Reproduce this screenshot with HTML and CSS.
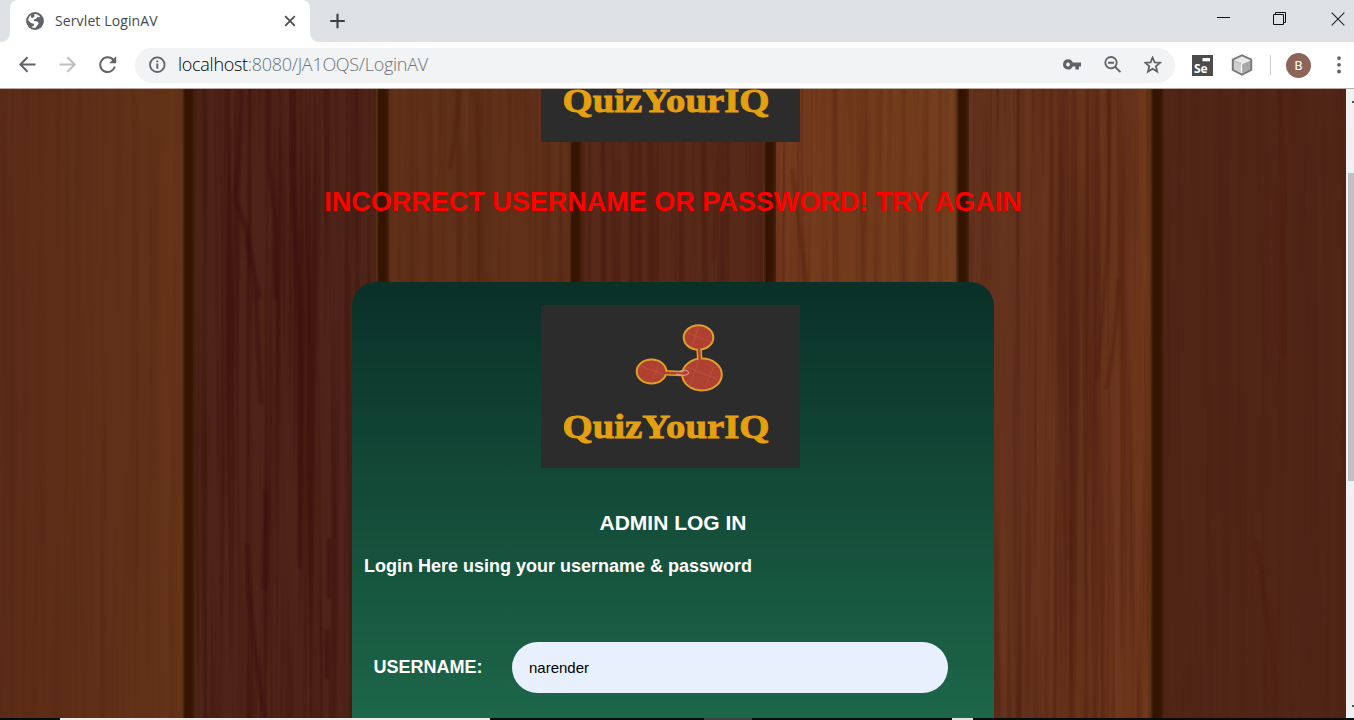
FILE: index.html
```html
<!DOCTYPE html>
<html lang="en">
<head>
<meta charset="utf-8">
<title>Servlet LoginAV</title>
<link rel="stylesheet" href="styles.css">
</head>
<body>
<div class="window">
  <header class="tabstrip">
    <svg class="corner left" width="10" height="42" viewBox="0 0 10 42"><path d="M0 42Q10 42 10 32V42Z" fill="#fff"/></svg>
    <div class="tab">
      <svg width="18" height="18" viewBox="0 0 18 18"><circle cx="9" cy="9" r="8.9" fill="#5f6368"/><path d="M8 2.1C10 1.6 12.5 2.6 14 4.4L12.8 5.4L11.4 4.8L10.4 6.5L7.6 7.8L8.4 9.2H11L12.8 11.2L11.4 13.2L9.6 15.8C8 16 6.5 15.6 5.3 14.9L8.1 13.4L7.8 11.8L5 11.1L2.1 8.3C2.3 6.2 3.4 4.3 5.2 3.1L4.7 5.2L6.5 6L8.7 4.2Z" fill="#fff"/></svg>
      <span class="tab-title">Servlet LoginAV</span>
      <svg class="tab-close" width="12" height="12" viewBox="0 0 12 12"><path d="M1.2 1.2L10.8 10.8M10.8 1.2L1.2 10.8" stroke="#4b4e52" stroke-width="1.8"/></svg>
    </div>
    <svg class="corner" width="10" height="42" viewBox="0 0 10 42"><path d="M0 32Q0 42 10 42H0Z" fill="#fff"/></svg>
    <svg class="new-tab" width="16" height="16" viewBox="0 0 16 16"><path d="M7.5 .7V15.3M.2 8H14.8" stroke="#3c4043" stroke-width="2.1"/></svg>
    <div class="controls">
      <svg width="14" height="14" viewBox="0 0 14 14"><path d="M0 6.5H13" stroke="#111" stroke-width="1"/></svg>
      <svg width="14" height="14" viewBox="0 0 14 14"><path d="M.5 3.5H10.5V13.5H.5ZM2.5 3.5V1.5H12.5V11.5H10.5" fill="none" stroke="#111"/></svg>
      <svg width="14" height="14" viewBox="0 0 14 14"><path d="M.7 .7L13.3 13.3M13.3 .7L.7 13.3" stroke="#222" stroke-width="1.1"/></svg>
    </div>
  </header>

  <div class="toolbar">
    <svg width="18" height="18" viewBox="0 0 18 18"><path d="M16.5 8.5H1.5M8.5 1.3L1.3 8.5L8.5 15.7" fill="none" stroke="#5f6368" stroke-width="2"/></svg>
    <svg width="18" height="18" viewBox="0 0 18 18"><path d="M.5 8.5H15.5M8.5 1.3L15.7 8.5L8.5 15.7" fill="none" stroke="#bdbfc1" stroke-width="2"/></svg>
    <svg width="18" height="18" viewBox="0 0 18 18"><path d="M14.4 4A7.4 7.4 0 1 0 15.8 10.6" fill="none" stroke="#5f6368" stroke-width="2"/><path d="M17.2 .3V7.3H10.2Z" fill="#5f6368"/></svg>
    <div class="omnibox">
      <svg width="18" height="18" viewBox="0 0 18 18"><circle cx="9.3" cy="8.7" r="7.3" fill="none" stroke="#5f6368" stroke-width="1.8"/><path d="M9.3 7.5V12.7M9.3 4.5V6.3" stroke="#5f6368" stroke-width="1.9"/></svg>
      <span class="url"><b>localhost</b>:8080/JA1OQS/LoginAV</span>
      <div class="omni-icons">
        <svg width="20" height="12" viewBox="0 0 20 12"><path fill-rule="evenodd" d="M6 .3A5.1 5.1 0 1 0 10.8 7.5H13.3V10.5H17V7.5H19V3.4H10.8A5.1 5.1 0 0 0 6 .3ZM6 3.6A1.9 1.9 0 1 1 6 7.4A1.9 1.9 0 0 1 6 3.6Z" fill="#5f6368"/></svg>
        <svg width="18" height="18" viewBox="0 0 18 18"><circle cx="7" cy="6.7" r="5.7" fill="none" stroke="#5f6368" stroke-width="1.8"/><path d="M4 6.7H10M11.2 10.9L16.4 16.1" stroke="#5f6368" stroke-width="2"/></svg>
        <svg width="18" height="18" viewBox="0 0 18 18"><path d="M8.6 1.5L10.6 6.3L16 6.7L11.9 10.2L13.2 15.5L8.6 12.7L4 15.5L5.3 10.2L1.2 6.7L6.6 6.3Z" fill="none" stroke="#5f6368" stroke-width="1.8"/></svg>
      </div>
    </div>
    <div class="extensions">
      <svg width="21" height="21" viewBox="0 0 21 21"><path d="M0 0H21V21H0Z" fill="#4b4c4b"/><path d="M10.5 3H18V6.3H10.5Z" fill="#fff"/><text class="selenium" x="2" y="18">Se</text></svg>
      <svg class="cube" width="22" height="22" viewBox="0 0 22 22"><path d="M11 1.2L20.3 5.5V16L11 20.8L1.7 16V5.5Z" fill="#aaa" stroke="#777" stroke-width="1.8"/><path d="M3 6.2L11 2.5L19 6.2L11 9.5Z" fill="#e9e9e9"/><path d="M3 7L10.5 10V19.2L3 15.5Z" fill="#cfcfcf"/><path d="M11 10L19 6.8V15.4L11 19.3Z" fill="#a8a8a8"/><path d="M10.6 19V9.6L18.7 6.3" fill="none" stroke="#f4f4f4" stroke-width="1.2"/></svg>
      <span class="divider"></span>
      <span class="avatar">B</span>
      <svg width="4" height="18" viewBox="0 0 4 18"><g fill="#5f6368"><circle cx="2" cy="2.1" r="1.9"/><circle cx="2" cy="8.8" r="1.9"/><circle cx="2" cy="15.5" r="1.9"/></g></svg>
    </div>
  </div>

  <div class="viewport">
    <main class="page">
      <svg class="wood" width="1346" height="629" viewBox="0 0 1346 629" preserveAspectRatio="none">
        <defs>
          <filter id="grain" x="0" y="0" width="100%" height="100%" color-interpolation-filters="sRGB">
            <feTurbulence type="fractalNoise" baseFrequency="0.13 0.0018" numOctaves="3" seed="8"/>
            <feColorMatrix values="0 0 0 0 .2  0 0 0 0 .03  0 0 0 0 .02  3 0 0 0 -1.3"/>
          </filter>
          <filter id="light" x="0" y="0" width="100%" height="100%" color-interpolation-filters="sRGB">
            <feTurbulence type="fractalNoise" baseFrequency="0.09 0.002" numOctaves="2" seed="21"/>
            <feColorMatrix values="0 0 0 0 .55  0 0 0 0 .33  0 0 0 0 .15  0 2.5 0 0 -1.15"/>
          </filter>
          <filter id="soft"><feGaussianBlur stdDeviation="1.2"/></filter>
          <linearGradient id="p1"><stop offset="0" stop-color="#5c2c17"/><stop offset=".5" stop-color="#5f2f18"/><stop offset="1" stop-color="#653418"/></linearGradient>
          <linearGradient id="p5"><stop offset="0" stop-color="#753a1e"/><stop offset=".5" stop-color="#713a1b"/><stop offset="1" stop-color="#743f1e"/></linearGradient>
          <linearGradient id="p6"><stop offset="0" stop-color="#64331d"/><stop offset=".6" stop-color="#63301a"/><stop offset="1" stop-color="#70381c"/></linearGradient>
          <linearGradient id="gap"><stop offset="0" stop-color="#5b3519"/><stop offset=".25" stop-color="#321400"/><stop offset=".75" stop-color="#381500"/><stop offset="1" stop-color="#472313"/></linearGradient>
        </defs>
        <rect width="186" height="629" fill="url(#p1)"/>
        <rect x="186" width="194" height="629" fill="#4e2418"/>
        <rect x="380" width="194" height="629" fill="#603018"/>
        <rect x="574" width="194" height="629" fill="#562919"/>
        <rect x="768" width="194" height="629" fill="url(#p5)"/>
        <rect x="962" width="194" height="629" fill="url(#p6)"/>
        <rect x="1156" width="190" height="629" fill="#522617"/>
        <rect x="194" width="184" height="629" filter="url(#grain)" opacity=".5"/>
        <rect x="387" width="184" height="629" filter="url(#grain)" opacity=".18"/>
        <rect x="580" width="184" height="629" filter="url(#grain)" opacity=".3"/>
        <rect x="774" width="184" height="629" filter="url(#grain)" opacity=".25"/>
        <rect x="968" width="184" height="629" filter="url(#grain)" opacity=".35"/>
        <rect width="184" height="629" filter="url(#grain)" opacity=".1"/>
        <rect x="1162" width="184" height="629" filter="url(#grain)" opacity=".14"/>
        <rect x="774" width="378" height="629" filter="url(#light)" opacity=".2"/>
        <g fill="none" stroke="#36100d" stroke-width="4" opacity=".5" filter="url(#soft)">
          <path d="M241 0Q242 60 235 110Q253 150 256 210L261 315M269 0V70L275 130V210M292 0V80L300 240V480M246 150L260 210M247 455Q249 530 265 629M266 400L264 500M329 450V510M327 540V590"/>
          <path d="M1108 0Q1110 110 1107 170L1097 290M1118 190Q1117 240 1107 300M1280 0L1284 100V270M1256 450L1266 520Q1276 560 1275 629" stroke="#4b1d0d" stroke-width="3"/>
          <path d="M450 80Q458 25 460 0M475 0L479 100V190M720 30L714 170M792 80L806 193" stroke="#421707" stroke-width="3" opacity=".6"/>
        </g>
        <g fill="url(#gap)">
          <rect x="182" width="13" height="629"/><rect x="376" width="13" height="629"/><rect x="569" width="13" height="629"/><rect x="763" width="13" height="629"/><rect x="956" width="13" height="629"/><rect x="1150" width="14" height="629"/>
        </g>
      </svg>

      <svg class="logo logo-top" width="259" height="163" viewBox="0 0 259 163"><rect width="259" height="163" fill="#2c2c2c"/><text class="brand" x="21.5" y="132.5" textLength="207" lengthAdjust="spacingAndGlyphs">QuizYourIQ</text></svg>
      <h1 class="error">INCORRECT USERNAME OR PASSWORD! TRY AGAIN</h1>

      <section class="card">
        <svg class="logo" width="259" height="163" viewBox="0 0 259 163">
          <rect width="259" height="163" fill="#2c2c2c"/>
          <path d="M124 67.8L150 69M158 42L159 60" stroke="#dda02a" stroke-width="5.5"/>
          <g fill="#b04030" stroke="#dda02a" stroke-width="2"><ellipse cx="157.5" cy="32.5" rx="14.8" ry="12.2"/><ellipse cx="110.5" cy="66.5" rx="14.8" ry="12.1"/><ellipse cx="161" cy="69.5" rx="19.8" ry="16"/></g>
          <path d="M123 67.8L148 69M158 43L159 58" stroke="#b04030" stroke-width="2.4"/>
          <path d="M138 66.5Q147 63 147.5 68Q147 72 135 69" fill="none" stroke="#e3a49b" stroke-width="1"/>
          <path d="M147 28L170 37M157 23L151 42M99 61L122 69M118 59L111 76M146 62L178 75M158 55L149 80M173 61L164 83" stroke="#c4685a" stroke-width=".4"/>
          <text class="brand" x="21.5" y="132.5" textLength="207" lengthAdjust="spacingAndGlyphs">QuizYourIQ</text>
        </svg>
        <h2 class="title">ADMIN LOG IN</h2>
        <p class="hint">Login Here using your username &amp; password</p>
        <label class="field"><span class="label">USERNAME:</span><input class="input" type="text" value="narender"></label>
      </section>
    </main>
    <aside class="scrollbar">
      <i class="arrow up"></i><i class="thumb"></i><i class="arrow down"></i>
    </aside>
  </div>
  <footer class="taskbar"><i class="search"></i><i class="active"></i><i class="item"></i></footer>
</div>
</body>
</html>
```
FILE: styles.css
```css
* { box-sizing: border-box; }
body { margin: 0; overflow: hidden; font-family: "Liberation Sans", Arial, sans-serif; }
svg { display: block; flex: none; }
.window { display: flex; flex-direction: column; width: 1354px; height: 720px; background: #fff; }

.tabstrip { display: flex; height: 42px; background: #dee1e6; }
.tab { display: flex; align-items: center; width: 300px; padding: 0 14px 0 16px; background: #fff; border-radius: 8px 8px 0 0; }
.tab-title { margin-left: 11px; padding-bottom: 2px; font: 14px "Open Sans", sans-serif; letter-spacing: .12px; color: #45494d; }
.tab-close { margin-left: auto; }
.new-tab { margin: 13px 0 0 10px; }
.controls { display: flex; gap: 42px; margin: 11px 9px 0 auto; }
.controls svg:last-child { margin: 1px -6px 0 2px; }
.controls { padding-right: 6px; }

.toolbar { display: flex; align-items: center; height: 46px; padding: 0 13px 0 19px; gap: 22px; background: #fff; }
.omnibox { display: flex; align-items: center; width: 1040px; height: 35px; margin-left: -4px; padding: 0 13px; border-radius: 18px; background: #f1f3f4; }
.url { margin-left: 12px; padding-bottom: 2px; font: 300 18px "Open Sans", sans-serif; letter-spacing: -.28px; color: #6c7278; white-space: nowrap; }
.url b { font-weight: 300; color: #000; }
.omni-icons { display: flex; align-items: center; gap: 22px; margin-left: auto; }
.extensions { display: flex; align-items: center; margin-left: -5px; }
.selenium { font: bold 12px "Open Sans", sans-serif; fill: #fff; }
.cube { margin-left: 18px; }
.divider { width: 1px; height: 20px; margin: 0 15px 0 17px; background: #c8cacc; }
.avatar { width: 25px; height: 25px; margin-right: 26px; border-radius: 50%; background: #8d6558; color: #fff; font: 13px/25px Roboto, sans-serif; text-align: center; }

.viewport { display: flex; height: 630px; border-top: 1px solid #b8aaa5; }
.page { position: relative; isolation: isolate; width: 1346px; height: 629px; overflow: hidden; }
.wood { position: absolute; inset: 0; z-index: -1; }
.logo { margin: 0 auto; }
.logo-top { margin: -110px 0 0 541px; }
.brand { font: bold 34px "Liberation Serif", serif; fill: #e4a010; stroke: #e4a010; stroke-width: .9px; }
.error { margin: 44px 0 0; height: 96px; color: #f00; font-size: 27px; line-height: 32px; text-align: center; white-space: nowrap; }
.card { width: 642px; height: 640px; margin-left: 352px; padding: 23px 12px 0; border-radius: 24px; background: linear-gradient(#0a3027, #1d674a 440px); color: #fff; }
.card .logo { margin-left: 177px; }
.title { margin: 42px 0 0; font-size: 21px; line-height: 26px; text-align: center; }
.hint { margin: 19px 0 0; font-size: 18px; font-weight: bold; line-height: 22px; }
.field { display: flex; align-items: center; margin-top: 65px; padding-left: 9.5px; }
.label { width: 138.5px; font-size: 18px; font-weight: bold; }
.input { width: 436px; height: 51px; padding: 0 17px; border: 0; border-radius: 26px; outline: 0; background: #e8f0fe; color: #000; font: 15px "Liberation Sans", Arial, sans-serif; }

.scrollbar { display: flex; flex-direction: column; align-items: flex-end; width: 8px; height: 629px; background: #f1f1f1; }
.thumb { width: 6px; height: 308px; margin-top: 70px; background: #c1c1c1; }
.arrow { width: 2px; height: 2px; background: #505050; }
.up { margin-top: 12px; }
.down { margin-top: auto; margin-bottom: 11px; }
.taskbar { display: flex; height: 2px; background: #080b0e; }
.search { width: 430px; margin-left: 60px; background: #eee; }
.active { width: 48px; margin-left: 214px; background: #3c4145; }
.item { width: 21px; margin-left: 200px; background: #e3e3e3; }
```
